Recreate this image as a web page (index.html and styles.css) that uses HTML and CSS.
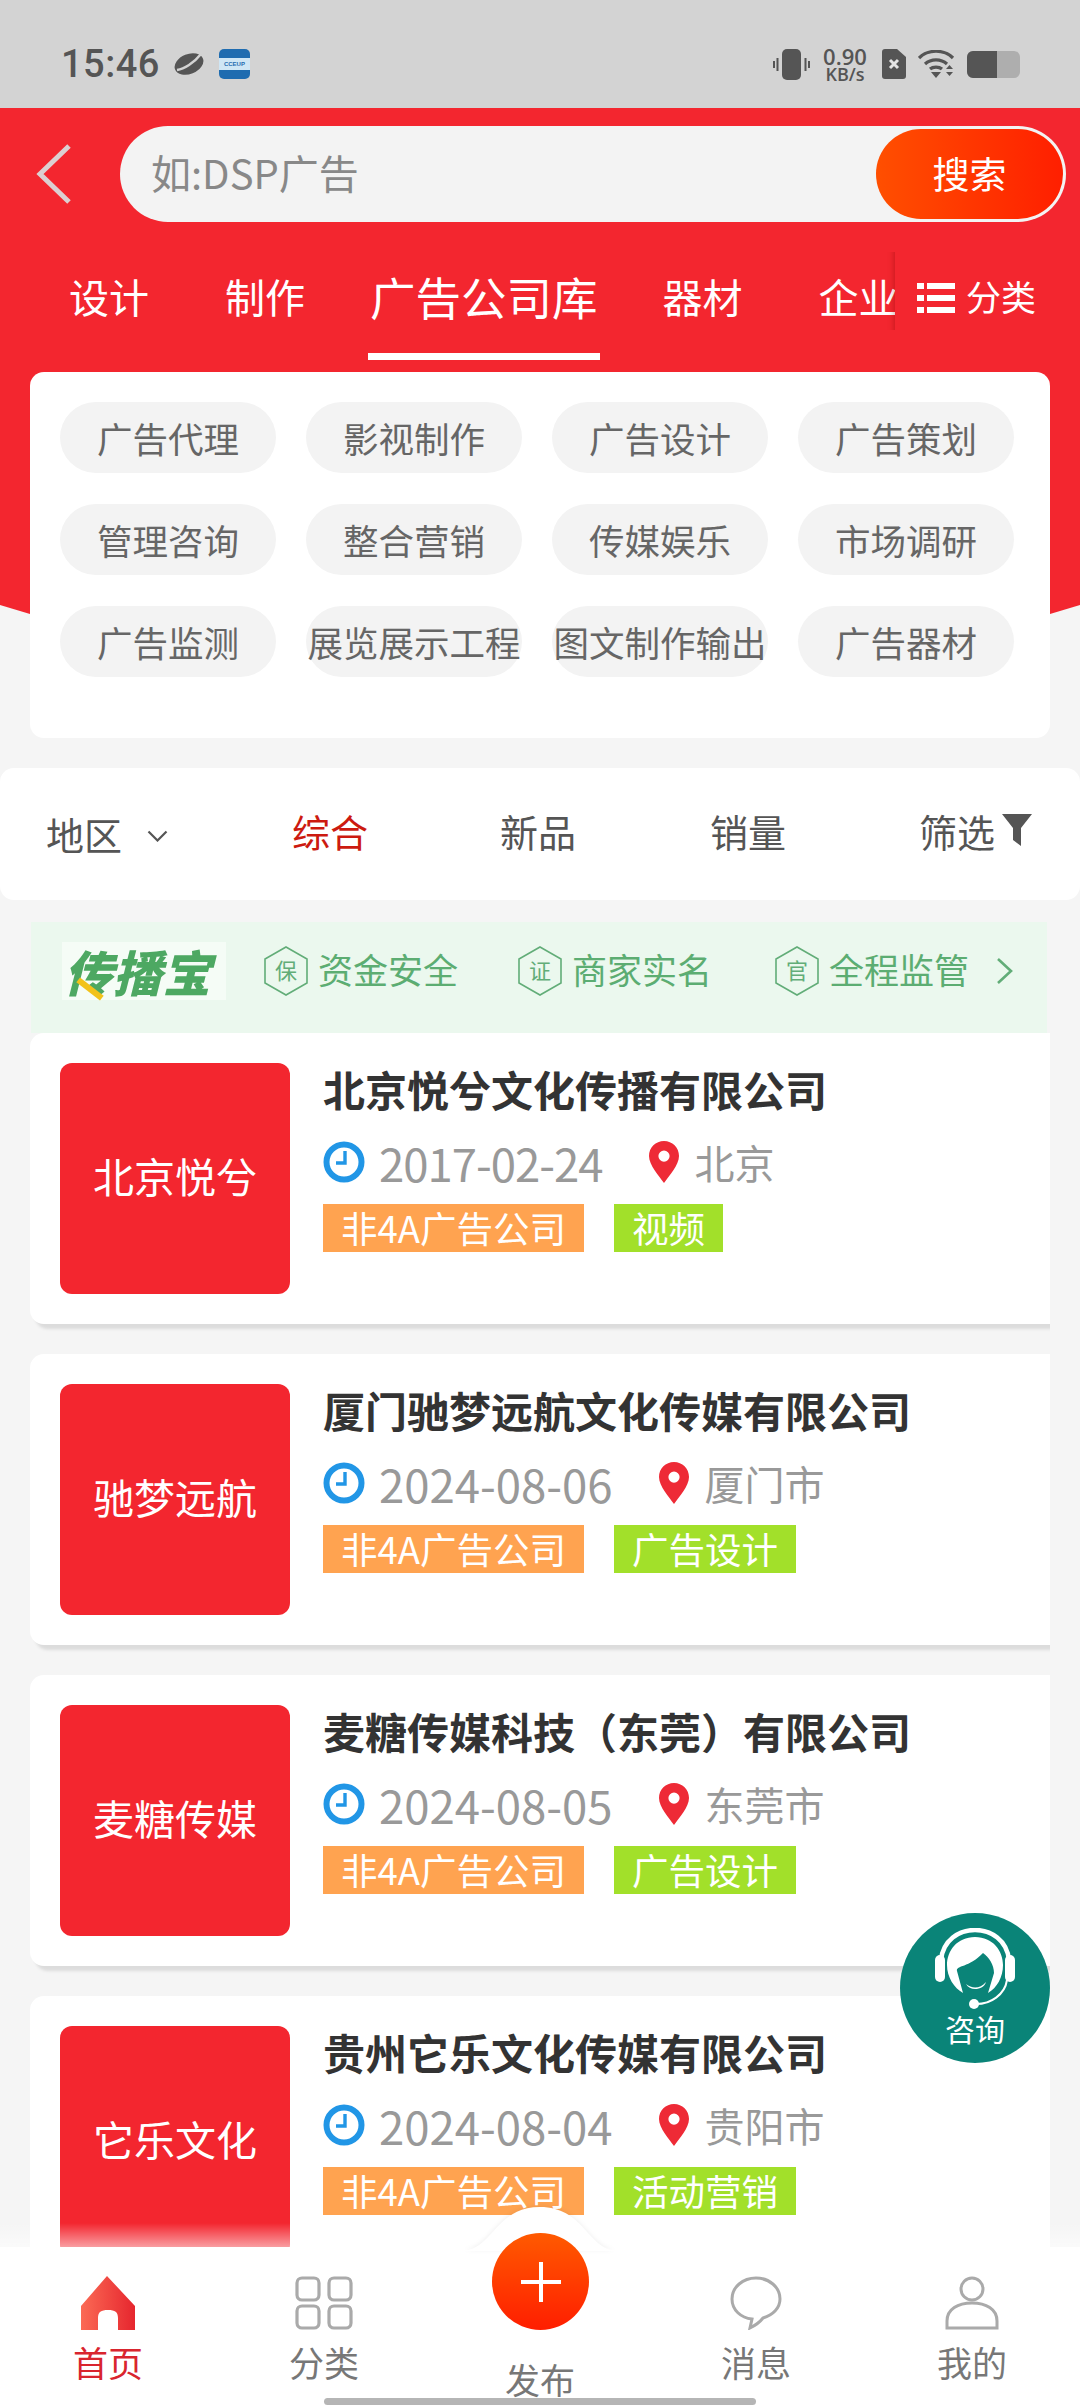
FILE: index.html
```html
<!DOCTYPE html>
<html lang="zh-CN">
  <head>
    <meta charset="UTF-8" />
    <meta name="viewport" content="width=device-width, initial-scale=1.0" />
    <title>广告公司库</title>
    <link rel="stylesheet" href="styles.css">
  </head>
  <body>
    <svg class="sprites" width="0" height="0">
      <symbol id="i-clock" viewBox="0 0 42 42">
        <circle cx="21" cy="21" r="17.5" fill="#fff" stroke="#2196e6" stroke-width="6" />
        <path d="M22 10v12h-9" fill="none" stroke="#2196e6" stroke-width="3.4" />
      </symbol>
      <symbol id="i-pin" viewBox="0 0 30 42">
        <path fill-rule="evenodd" d="M15 0C6.7 0 0 6.6 0 15c0 9 10 20 15 27 5-7 15-18 15-27C30 6.6 23.3 0 15 0zm0 9.5a5.6 5.6 0 1 1 0 11.2 5.6 5.6 0 0 1 0-11.2z" fill="#ee2a36" />
      </symbol>
      <symbol id="i-hex" viewBox="0 0 44 50">
        <polygon points="22,1 43,13 43,37 22,49 1,37 1,13" fill="none" stroke="#62ad78" stroke-width="1.6" />
      </symbol>
    </svg>

    <div class="page">
      <div class="statusbar">
        <div class="status-left">
          <span class="clock-time">15:46</span>
          <svg class="st-planet" width="30" height="26" viewBox="0 0 30 26">
            <ellipse cx="15" cy="13" rx="15" ry="10" transform="rotate(-22 15 13)" fill="#555" />
            <path d="M3 19C10 18 20 12 27 3" fill="none" stroke="#d3d3d3" stroke-width="2.500" />
          </svg>
          <span class="st-app"><span class="st-app-band">CCEUP</span></span>
        </div>
        <div class="status-right">
          <svg width="37" height="31" viewBox="0 0 37 31">
            <rect x="9" y="0" width="19" height="31" rx="5" fill="#555" />
            <path d="M4.5 9v13M1 12v7M32.500 9v13M36 12v7" stroke="#555" stroke-width="2" />
          </svg>
          <span class="st-speed"><b>0.90</b><i>KB/s</i></span>
          <svg width="24" height="30" viewBox="0 0 24 30">
            <path d="M3 0h12l9 8v19a3 3 0 0 1-3 3H3a3 3 0 0 1-3-3V3a3 3 0 0 1 3-3z" fill="#555" />
            <path d="M8 11l8 8M16 11l-8 8" stroke="#e4e4e4" stroke-width="3" />
          </svg>
          <svg width="37" height="28" viewBox="0 0 37 28">
            <path d="M1 8c9-9 25-9 34 0M7 14c6-5.500 16-5.500 22 0M12 19c3-2.500 9-2.500 12 0" fill="none" stroke="#555" stroke-width="3.200" />
            <path d="M13 22h10l-5 6zM28 19l3.500-4 3.500 4zM28 22h7l-3.500 4z" fill="#555" />
          </svg>
          <span class="st-battery"><span class="st-battery-fill"></span></span>
        </div>
      </div>

      <header class="hero">
        <div class="search-row">
          <svg class="back" width="36" height="60" viewBox="0 0 36 60">
            <path d="M33 2L4 30l29 28" fill="none" stroke="#dccfd1" stroke-width="5" />
          </svg>
          <div class="search-box">
            <span class="search-hint">如:DSP广告</span>
            <button class="search-btn" type="button">搜索</button>
          </div>
        </div>

        <nav class="tabs">
          <div class="tab-list">
            <a class="tab">设计</a>
            <a class="tab">制作</a>
            <a class="tab tab-active"><span>广告公司库</span></a>
            <a class="tab">器材</a>
            <a class="tab">企业</a>
          </div>
          <a class="tab-more">
            <svg width="38" height="30" viewBox="0 0 38 30">
              <path d="M0 0h7v6H0zM10 0h28v6H10zM0 12h7v6H0zM10 12h28v6H10zM0 24h7v6H0zM10 24h28v6H10z" fill="#fff" />
            </svg>
            分类
          </a>
        </nav>

        <div class="chip-panel">
          <a class="chip">广告代理</a>
          <a class="chip">影视制作</a>
          <a class="chip">广告设计</a>
          <a class="chip">广告策划</a>
          <a class="chip">管理咨询</a>
          <a class="chip">整合营销</a>
          <a class="chip">传媒娱乐</a>
          <a class="chip">市场调研</a>
          <a class="chip">广告监测</a>
          <a class="chip">展览展示工程</a>
          <a class="chip">图文制作输出</a>
          <a class="chip">广告器材</a>
        </div>
      </header>

      <div class="filter-bar">
        <a class="filter filter-area">地区
          <svg width="21" height="12" viewBox="0 0 21 12"><path d="M1.500 1.500l9 9 9-9" fill="none" stroke="#555" stroke-width="2.200" /></svg>
        </a>
        <a class="filter filter-active">综合</a>
        <a class="filter">新品</a>
        <a class="filter">销量</a>
        <a class="filter">筛选
          <svg width="30" height="32" viewBox="0 0 30 32"><path d="M0 0h30L19 14v18l-8-6V14z" fill="#555" /></svg>
        </a>
      </div>

      <div class="trust-bar">
        <div class="trust-logo">传播宝<i class="logo-dash"></i></div>
        <svg class="hex" width="44" height="50"><use href="#i-hex" /><text x="22" y="33" text-anchor="middle">保</text></svg>
        <span class="trust-text">资金安全</span>
        <svg class="hex hex-2" width="44" height="50"><use href="#i-hex" /><text x="22" y="33" text-anchor="middle">证</text></svg>
        <span class="trust-text">商家实名</span>
        <svg class="hex hex-3" width="44" height="50"><use href="#i-hex" /><text x="22" y="33" text-anchor="middle">官</text></svg>
        <span class="trust-text">全程监管</span>
        <svg class="trust-arrow" width="17" height="26" viewBox="0 0 17 26"><path d="M2 1l13 12L2 25" fill="none" stroke="#62ad78" stroke-width="2.600" /></svg>
      </div>

      <section class="card">
        <div class="card-thumb">北京悦兮</div>
        <div class="card-info">
          <h2 class="card-title">北京悦兮文化传播有限公司</h2>
          <div class="card-meta">
            <svg class="ic-clock" width="42" height="42"><use href="#i-clock" /></svg>
            <span class="card-date card-date-tight">2017-02-24</span>
            <svg class="ic-pin" width="30" height="42"><use href="#i-pin" /></svg>
            <span class="card-city">北京</span>
          </div>
          <div class="card-tags">
            <span class="tag tag-orange">非4A广告公司</span>
            <span class="tag tag-green">视频</span>
          </div>
        </div>
      </section>

      <section class="card">
        <div class="card-thumb">驰梦远航</div>
        <div class="card-info">
          <h2 class="card-title">厦门驰梦远航文化传媒有限公司</h2>
          <div class="card-meta">
            <svg class="ic-clock" width="42" height="42"><use href="#i-clock" /></svg>
            <span class="card-date">2024-08-06</span>
            <svg class="ic-pin" width="30" height="42"><use href="#i-pin" /></svg>
            <span class="card-city">厦门市</span>
          </div>
          <div class="card-tags">
            <span class="tag tag-orange">非4A广告公司</span>
            <span class="tag tag-green">广告设计</span>
          </div>
        </div>
      </section>

      <section class="card">
        <div class="card-thumb">麦糖传媒</div>
        <div class="card-info">
          <h2 class="card-title">麦糖传媒科技（东莞）有限公司</h2>
          <div class="card-meta">
            <svg class="ic-clock" width="42" height="42"><use href="#i-clock" /></svg>
            <span class="card-date">2024-08-05</span>
            <svg class="ic-pin" width="30" height="42"><use href="#i-pin" /></svg>
            <span class="card-city">东莞市</span>
          </div>
          <div class="card-tags">
            <span class="tag tag-orange">非4A广告公司</span>
            <span class="tag tag-green">广告设计</span>
          </div>
        </div>
      </section>

      <section class="card">
        <div class="card-thumb">它乐文化</div>
        <div class="card-info">
          <h2 class="card-title">贵州它乐文化传媒有限公司</h2>
          <div class="card-meta">
            <svg class="ic-clock" width="42" height="42"><use href="#i-clock" /></svg>
            <span class="card-date">2024-08-04</span>
            <svg class="ic-pin" width="30" height="42"><use href="#i-pin" /></svg>
            <span class="card-city">贵阳市</span>
          </div>
          <div class="card-tags">
            <span class="tag tag-orange">非4A广告公司</span>
            <span class="tag tag-green">活动营销</span>
          </div>
        </div>
      </section>

      <a class="consult">
        <svg width="80" height="84" viewBox="0 0 80 84">
          <path d="M6 32C8 12 24 2 40 2s32 10 34 30" fill="none" stroke="#fff" stroke-width="4.500" />
          <rect x="0" y="27" width="10" height="27" rx="5" fill="#fff" />
          <rect x="70" y="27" width="10" height="27" rx="5" fill="#fff" />
          <path d="M40 9c-18 0-28 14-28 28 0 12 7 23 16 28l-6-22c-1-6 12-3 26-18 6 4 11 12 11 20l-6 20c9-5 15-16 15-28C68 23 58 9 40 9z" fill="#fff" />
          <path d="M31 56c6 5 14 5 20-2-2 8-16 10-20 2z" fill="#fff" />
          <path d="M72 52c-2 14-16 25-33 24" fill="none" stroke="#fff" stroke-width="2" />
          <circle cx="39" cy="76" r="5" fill="#fff" />
        </svg>
        <span class="consult-label">咨询</span>
      </a>

      <footer class="tabbar">
        <svg class="tabbar-hump" width="150" height="44" viewBox="0 0 150 44">
          <path d="M0 44c28-4 32-44 75-44s47 40 75 44z" fill="#fff" />
        </svg>
        <a class="bar-item bar-active">
          <svg width="56" height="54" viewBox="0 0 56 54">
            <defs>
              <linearGradient id="home-grad" x1="0" x2="1" y1="0" y2="0">
                <stop offset="0" stop-color="#fb6a55" />
                <stop offset="1" stop-color="#e6262e" />
              </linearGradient>
            </defs>
            <path d="M27 0L55 30v24H38V42c0-6-3-8-10-8s-10 2-10 8v12H1V30z" fill="url(#home-grad)" />
          </svg>
          <span>首页</span>
        </a>
        <a class="bar-item">
          <svg width="58" height="54" viewBox="0 0 58 54">
            <g fill="none" stroke="#aaa" stroke-width="3.200">
              <rect x="2" y="2" width="22" height="22" rx="5" />
              <rect x="34" y="2" width="22" height="22" rx="5" />
              <rect x="2" y="30" width="22" height="22" rx="5" />
              <rect x="34" y="30" width="22" height="22" rx="5" />
            </g>
          </svg>
          <span>分类</span>
        </a>
        <a class="bar-item bar-publish">
          <span class="fab">
            <svg width="42" height="42" viewBox="0 0 42 42"><path d="M21 1v40M1 21h40" stroke="#fff" stroke-width="4" /></svg>
          </span>
          <span>发布</span>
        </a>
        <a class="bar-item">
          <svg width="52" height="54" viewBox="0 0 52 54">
            <path d="M26 2C13 2 2 11 2 23c0 11 9 19 20 20l-2 9c6-3 10-6 13-10 10-3 17-10 17-19C50 11 39 2 26 2z" fill="none" stroke="#aaa" stroke-width="3" />
          </svg>
          <span>消息</span>
        </a>
        <a class="bar-item">
          <svg width="54" height="54" viewBox="0 0 54 54">
            <g fill="none" stroke="#aaa" stroke-width="3">
              <circle cx="27" cy="13" r="11" />
              <path d="M2 52v-7c0-12 11-18 25-18s25 6 25 18v7z" />
            </g>
          </svg>
          <span>我的</span>
        </a>
        <div class="home-indicator"></div>
      </footer>
    </div>
  </body>
</html>
```

FILE: styles.css
```css
* {
  box-sizing: border-box;
}

body {
  margin: 0;
  padding: 0;
  font-family: "Noto Sans CJK SC", "Noto Sans", sans-serif;
  background: #f5f5f5;
}

.sprites {
  position: absolute;
}

.page {
  position: relative;
  width: 1080px;
  height: 2408px;
  overflow: hidden;
  background: #f5f5f5;
}

/* status bar */
.statusbar {
  height: 108px;
  background: #d3d3d3;
  display: flex;
  justify-content: space-between;
  align-items: flex-start;
  padding: 47px 60px 0 61px;
  color: #555;
}

.status-left,
.status-right {
  display: flex;
  align-items: center;
  height: 34px;
}

.clock-time {
  font-family: Roboto, sans-serif;
  font-weight: 500;
  font-size: 38px;
  line-height: 34px;
  letter-spacing: 0.5px;
}

.st-planet {
  margin-left: 14px;
}

.st-app {
  margin-left: 15px;
  width: 31px;
  height: 30px;
  border-radius: 5px;
  background: #1f6cb0;
  display: flex;
  align-items: center;
}

.st-app-band {
  width: 100%;
  background: #cfe6f5;
  color: #1f6cb0;
  font-family: "Liberation Sans", sans-serif;
  font-size: 6px;
  font-weight: 700;
  line-height: 12px;
  text-align: center;
}

.status-right svg {
  flex: none;
}

.st-speed {
  width: 46px;
  margin: 0 14px 0 12px;
  display: flex;
  flex-direction: column;
  align-items: center;
  font-family: "Open Sans", sans-serif;
  font-weight: 600;
}

.st-speed b {
  font-size: 22px;
  line-height: 19px;
  font-weight: 600;
}

.st-speed i {
  font-size: 18px;
  line-height: 16px;
  font-style: normal;
}

.status-right svg + svg {
  margin-left: 12px;
}

.st-battery {
  position: relative;
  margin-left: 12px;
  width: 53px;
  height: 27px;
  border-radius: 6px;
  background: #aeaeae;
  overflow: hidden;
}

.st-battery-fill {
  display: block;
  width: 30px;
  height: 100%;
  background: #555;
}

/* red header */
.hero {
  position: relative;
  z-index: 0;
  height: 630px;
}

.hero::before {
  content: "";
  position: absolute;
  z-index: -1;
  left: 0;
  top: 0;
  width: 100%;
  height: 520px;
  background: #f3262f;
  clip-path: polygon(0 0, 100% 0, 100% 497px, 1050px 506px, 540px 520px, 30px 506px, 0 497px);
}

.search-row {
  display: flex;
  align-items: center;
  padding: 18px 14px 0 36px;
}

.back {
  flex: none;
}

.search-box {
  margin-left: 48px;
  flex: 1;
  height: 96px;
  border-radius: 48px;
  background: #f3f3f3;
  display: flex;
  align-items: center;
  justify-content: space-between;
  padding: 3px 3px 3px 31px;
}

.search-hint {
  padding-bottom: 4px;
  font-size: 40px;
  color: #888;
}

.search-btn {
  width: 187px;
  height: 90px;
  padding-bottom: 4px;
  border: none;
  border-radius: 45px;
  background: linear-gradient(90deg, #ff4f00 0%, #ff1f00 100%);
  color: #fff;
  font-family: inherit;
  font-size: 37px;
}

.tabs {
  display: flex;
  height: 138px;
  color: #fff;
}

.tab-list {
  width: 895px;
  display: flex;
  overflow: hidden;
  padding: 48px 0 0 31px;
}

.tab {
  flex: none;
  padding: 0 38px;
  font-size: 40px;
  line-height: 52px;
}

.tab-active {
  padding: 0 28px;
  font-size: 45.500px;
}

.tab-active span {
  display: block;
  margin: 0 -3px;
  padding: 0 2px 31px;
  border-bottom: 7px solid #fff;
  text-align: center;
}

.tab-more {
  flex: 1;
  display: flex;
  align-items: flex-start;
  gap: 11px;
  padding: 48px 0 0 22px;
  font-size: 35px;
  line-height: 52px;
  box-shadow: -5px 0 6px -4px rgba(120, 0, 0, 0.35);
  clip-path: inset(30px 0 30px -10px);
}

.tab-more svg {
  margin-top: 13px;
}

.chip-panel {
  margin: 12px 30px 0;
  height: 366px;
  padding: 30px 36px 0 30px;
  background: #fff;
  border-radius: 14px;
  display: grid;
  grid-template-columns: repeat(4, 216px);
  grid-auto-rows: 71px;
  gap: 31px 30px;
}

.chip {
  border-radius: 36px;
  background: #f3f3f3;
  color: #666;
  font-size: 35.500px;
  line-height: 71px;
  text-align: center;
  white-space: nowrap;
}

/* sort bar */
.filter-bar {
  margin-top: 30px;
  height: 132px;
  background: #fff;
  border-radius: 14px;
  display: grid;
  grid-template-columns: 246px 208px 210px 209px auto;
  padding: 35px 0 0 46px;
}

.filter {
  display: flex;
  align-items: center;
  height: 54px;
  font-size: 38px;
  color: #555;
}

.filter svg {
  margin-left: 7px;
}

.filter-area {
  margin-top: 3px;
}

.filter-area svg {
  margin: 6px 0 0 25px;
}

.filter-active {
  color: #cc1a10;
}

/* guarantee strip */
.trust-bar {
  margin: 22px 33px 0 31px;
  height: 111px;
  background: #ebf8ee;
  display: flex;
  align-items: center;
  padding: 0 0 14px 31px;
}

.trust-logo {
  position: relative;
  width: 164px;
  height: 58px;
  padding-left: 2px;
  background: #f5fcf6;
  color: #4da862;
  font-size: 49px;
  font-weight: 900;
  font-style: italic;
  line-height: 58px;
  white-space: nowrap;
}

.logo-dash {
  position: absolute;
  left: 13px;
  bottom: 8px;
  width: 30px;
  height: 6px;
  background: #f2c21a;
  transform: rotate(38deg);
}

.hex {
  flex: none;
  margin-left: 38px;
}

.hex-2 {
  margin-left: 60px;
}

.hex-3 {
  margin-left: 63px;
}

.hex text {
  font-size: 22px;
  fill: #62ad78;
}

.trust-text {
  margin: 0 0 4px 10px;
  font-size: 35px;
  color: #5cad72;
  white-space: nowrap;
}

.trust-arrow {
  flex: none;
  margin-left: 27px;
}

/* company cards */
.card {
  margin: 0 30px 30px;
  height: 291px;
  padding: 30px;
  background: #fff;
  border-radius: 14px 0 0 14px;
  box-shadow: 4px 6px 3px -1px #dcdcdc;
  clip-path: inset(-12px 0 -12px -12px);
  display: flex;
}

.card-thumb {
  flex: none;
  width: 230px;
  height: 231px;
  border-radius: 12px;
  background: #f3262f;
  color: #fff;
  font-size: 41px;
  line-height: 225px;
  text-align: center;
  white-space: nowrap;
}

.card-info {
  margin-left: 33px;
  min-width: 0;
}

.card-title {
  margin: -2px 0 0;
  font-size: 42px;
  font-weight: 700;
  line-height: 56px;
  color: #333;
  white-space: nowrap;
}

.card-meta {
  margin-top: 23px;
  height: 44px;
  display: flex;
  align-items: center;
  color: #999;
}

.card-date {
  margin-left: 14px;
  font-size: 45.500px;
}

.card-date-tight {
  letter-spacing: -1px;
}

.ic-pin {
  margin-left: 46px;
}

.card-city {
  margin-left: 16px;
  font-size: 40px;
}

.card-tags {
  margin-top: 20px;
  display: flex;
  gap: 30px;
}

.tag {
  height: 48px;
  padding: 0 18px;
  color: #fff;
  font-size: 36.500px;
  line-height: 48px;
}

.tag-orange {
  background: #ffa350;
}

.tag-green {
  background: #a2e02a;
}

/* floating help button */
.consult {
  position: absolute;
  left: 900px;
  top: 1913px;
  width: 150px;
  height: 150px;
  border-radius: 50%;
  background: #0a8478;
  color: #fff;
  display: flex;
  flex-direction: column;
  align-items: center;
  padding-top: 15px;
}

.consult-label {
  margin-top: -4px;
  font-size: 30px;
  line-height: 40px;
}

/* bottom nav */
.tabbar {
  position: absolute;
  left: 0;
  bottom: 0;
  width: 100%;
  height: 161px;
  background: #fff;
  display: grid;
  grid-template-columns: repeat(5, 216px);
}

.tabbar::before {
  content: "";
  position: absolute;
  left: 0;
  top: -24px;
  width: 100%;
  height: 24px;
  background: linear-gradient(rgba(255, 255, 255, 0), rgba(255, 255, 255, 0.55));
}

.tabbar-hump {
  position: absolute;
  left: 465px;
  top: -40px;
  filter: drop-shadow(0 -1px 2px rgba(0, 0, 0, 0.06));
}

.bar-item {
  position: relative;
  display: flex;
  flex-direction: column;
  align-items: center;
  padding-top: 29px;
  color: #777;
  font-size: 35px;
  line-height: 44px;
}

.bar-item span:last-child {
  margin-top: 10px;
}

.bar-active {
  color: #d9252e;
}

.bar-publish {
  justify-content: flex-end;
  padding: 0 0 7px;
}

.fab {
  position: absolute;
  left: 60px;
  top: -14px;
  width: 97px;
  height: 97px;
  border-radius: 50%;
  background: linear-gradient(#ff5a00, #ff1e00);
  display: flex;
  align-items: center;
  justify-content: center;
}

.home-indicator {
  position: absolute;
  left: 324px;
  bottom: 3px;
  width: 432px;
  height: 7px;
  border-radius: 4px;
  background: #b5b5b5;
}
```
